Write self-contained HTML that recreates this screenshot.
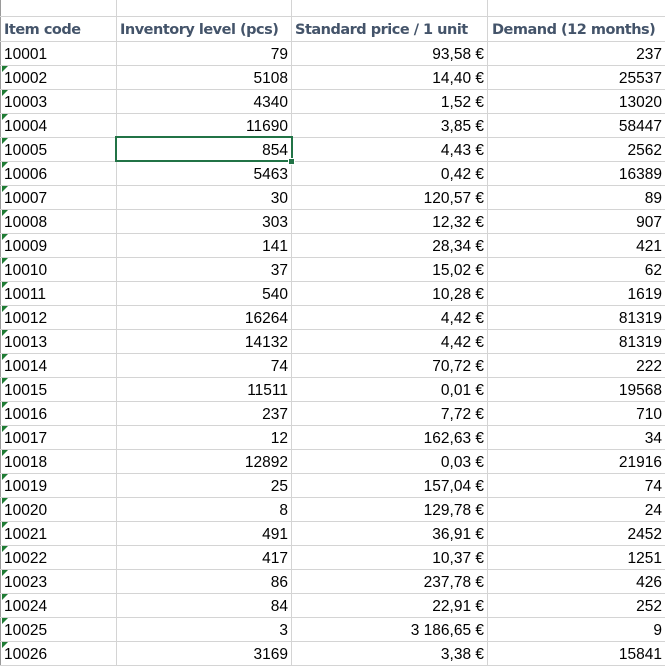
<!DOCTYPE html>
<html><head><meta charset="utf-8"><style>
body{margin:0;width:665px;height:665px;overflow:hidden;background:#fff;position:relative;font-family:"Liberation Sans",Arial,sans-serif}
.v{position:absolute;top:0;width:1px;height:665px;background:#d4d4d4}
.h{position:absolute;left:0;height:1px;width:665px;background:#d4d4d4}
.c{position:absolute;height:24px;line-height:26px;font-size:15.5px;color:#000;white-space:nowrap}
.l{left:4px}
.r{text-align:right}
.hd{font-weight:bold;color:#44546a;font-family:"DejaVu Sans",sans-serif;letter-spacing:-0.5px;font-size:14.5px;line-height:27px}
.t{position:absolute;left:2px;width:0;height:0;border-top:6px solid #1e7b34;border-right:6px solid transparent}
</style></head><body>
<div class="v" style="left:0;background:#9a9a9a"></div>
<div class="v" style="left:116px"></div>
<div class="v" style="left:291px"></div>
<div class="v" style="left:487px"></div>
<div id="g"></div>
<script>
var d=[["10001",79,"93,58 €",237],["10002",5108,"14,40 €",25537],["10003",4340,"1,52 €",13020],["10004",11690,"3,85 €",58447],["10005",854,"4,43 €",2562],["10006",5463,"0,42 €",16389],["10007",30,"120,57 €",89],["10008",303,"12,32 €",907],["10009",141,"28,34 €",421],["10010",37,"15,02 €",62],["10011",540,"10,28 €",1619],["10012",16264,"4,42 €",81319],["10013",14132,"4,42 €",81319],["10014",74,"70,72 €",222],["10015",11511,"0,01 €",19568],["10016",237,"7,72 €",710],["10017",12,"162,63 €",34],["10018",12892,"0,03 €",21916],["10019",25,"157,04 €",74],["10020",8,"129,78 €",24],["10021",491,"36,91 €",2452],["10022",417,"10,37 €",1251],["10023",86,"237,78 €",426],["10024",84,"22,91 €",252],["10025",3,"3 186,65 €",9],["10026",3169,"3,38 €",15841]];
var s='<div class="h" style="top:16px"></div><div class="h" style="top:41px"></div>';
s+='<div class="c hd" style="top:17px;left:4px">Item code</div><div class="c hd" style="top:17px;left:120px">Inventory level (pcs)</div><div class="c hd" style="top:17px;left:295px">Standard price / 1 unit</div><div class="c hd" style="top:17px;left:492px">Demand (12 months)</div>';
for(var i=0;i<d.length;i++){var y=42+i*24;
s+='<div class="h" style="top:'+(y+23)+'px"></div>';
if(i>0)s+='<div class="t" style="top:'+y+'px"></div>';
s+='<div class="c l" style="top:'+y+'px">'+d[i][0]+'</div>';
s+='<div class="c r" style="top:'+y+'px;left:117px;width:171px">'+d[i][1]+'</div>';
s+='<div class="c r" style="top:'+y+'px;left:292px;width:192px">'+d[i][2]+'</div>';
s+='<div class="c r" style="top:'+y+'px;left:488px;width:174px">'+d[i][3]+'</div>';}
s+='<div style="position:absolute;left:115px;top:136px;width:174px;height:22px;border:2px solid #217346"></div><div style="position:absolute;left:288px;top:158px;width:5px;height:5px;background:#217346;border:1px solid #fff"></div>';
document.getElementById('g').innerHTML=s;
</script>
</body></html>
